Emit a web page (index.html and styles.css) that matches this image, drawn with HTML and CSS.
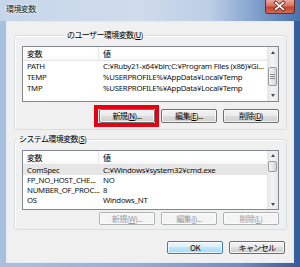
FILE: index.html
```html
<!DOCTYPE html>
<html lang="ja">
<head>
<meta charset="utf-8">
<title>環境変数</title>
<link rel="stylesheet" href="styles.css">
</head>
<body>
<div class="window">
  <div class="titlebar">
    <span class="title">環境変数</span>
    <span class="close">
      <svg width="30" height="14" viewBox="0 0 30 14">
        <path d="M11 3.5 L19 10.5 M19 3.5 L11 10.5" stroke="#5a2a22" stroke-width="3.4" stroke-linecap="square"/>
        <path d="M11 3.5 L19 10.5 M19 3.5 L11 10.5" stroke="#ffffff" stroke-width="1.8" stroke-linecap="square"/>
      </svg>
    </span>
  </div>
  <div class="client">
    <fieldset class="group group-user">
      <legend>のユーザー環境変数(<u>U</u>)</legend>
      <div class="listview lv-user">
        <div class="lv-body">
          <div class="lv-head"><span class="c1">変数</span><span class="c2">値</span></div>
          <div class="row"><span class="c1">PATH</span><span class="c2">C:¥Ruby21-x64¥bin;C:¥Program Files (x86)¥Gi...</span></div>
          <div class="row"><span class="c1">TEMP</span><span class="c2">%USERPROFILE%¥AppData¥Local¥Temp</span></div>
          <div class="row"><span class="c1">TMP</span><span class="c2">%USERPROFILE%¥AppData¥Local¥Temp</span></div>
        </div>
        <div class="scrollbar">
          <span class="arrow up"></span>
          <span class="track"><span class="thumb grip"><i></i><i></i><i></i></span></span>
          <span class="arrow down"></span>
        </div>
      </div>
      <div class="buttons">
        <button class="btn marked">新規(<u>N</u>)...</button>
        <button class="btn">編集(<u>E</u>)...</button>
        <button class="btn">削除(<u>D</u>)</button>
      </div>
    </fieldset>

    <fieldset class="group group-sys">
      <legend>システム環境変数(<u>S</u>)</legend>
      <div class="listview lv-sys">
        <div class="lv-body">
          <div class="lv-head"><span class="c1">変数</span><span class="c2">値</span></div>
          <div class="row selected"><span class="c1">ComSpec</span><span class="c2">C:¥Windows¥system32¥cmd.exe</span></div>
          <div class="row"><span class="c1">FP_NO_HOST_CHE...</span><span class="c2">NO</span></div>
          <div class="row"><span class="c1">NUMBER_OF_PROC...</span><span class="c2">8</span></div>
          <div class="row"><span class="c1">OS</span><span class="c2">Windows_NT</span></div>
        </div>
        <div class="scrollbar">
          <span class="arrow up"></span>
          <span class="track"><span class="thumb"></span></span>
          <span class="arrow down"></span>
        </div>
      </div>
      <div class="buttons">
        <button class="btn" disabled>新規(<u>W</u>)...</button>
        <button class="btn" disabled>編集(<u>I</u>)...</button>
        <button class="btn" disabled>削除(<u>L</u>)</button>
      </div>
    </fieldset>

    <div class="dialog-buttons">
      <button class="btn default">OK</button>
      <button class="btn">キャンセル</button>
    </div>
  </div>
</div>
</body>
</html>
```

FILE: styles.css
```css
* { box-sizing: border-box; }
html, body { margin: 0; padding: 0; }
body {
  width: 300px;
  height: 267px;
  overflow: hidden;
  font-family: "Noto Sans CJK JP", "Noto Sans", sans-serif;
  font-size: 8px;
  letter-spacing: -0.6px;
  color: #000;
  background: #fff;
}
u { text-decoration: underline; text-underline-offset: 1px; }

.window {
  width: 300px;
  height: 267px;
  display: flex;
  flex-direction: column;
  padding-bottom: 4px;
  background: linear-gradient(to right, #a9c1e0 0%, #92afd6 45%, #6a8ec3 80%, #345c99 100%);
}

.titlebar {
  height: 21px;
  flex: none;
  display: flex;
  justify-content: space-between;
  align-items: flex-start;
  padding: 0 5px 0 6px;
  background: linear-gradient(to right, #c6d6ea 0%, #cfdcec 45%, #bccee6 70%, #7e9ecb 86%, #4a71ac 100%);
}
.title {
  margin-top: 3px;
  line-height: 12px;
  font-size: 8px;
  color: #1a1a1a;
  text-shadow: 0 0 3px #fff, 0 0 2px #fff;
}
.close {
  width: 30px;
  height: 14px;
  display: flex;
  border: 1px solid #6b2e26;
  border-top: none;
  border-radius: 0 0 3px 3px;
  background: linear-gradient(#e9a99c 0%, #d6725f 45%, #c4442f 55%, #d36b53 100%);
  overflow: hidden;
}
.close svg { display: block; margin: -1px 0 0 -1px; }

.client {
  flex: 1;
  margin: 0 6px;
  border: 1px solid #e4ebf4;
  background: #f0f0f0;
  padding: 7px 6px 0 7px;
  display: flex;
  flex-direction: column;
}

.group {
  margin: 0;
  padding: 0 7px 6px 7px;
  border: 1px solid #d5dfe5;
  border-radius: 3px;
  min-width: 0;
  box-shadow: inset 1px 1px 0 #fff;
}
.group legend {
  padding: 0 2px;
  line-height: 12px;
  font-size: 8px;
}
.group-user { height: 101px; }
.group-user legend { margin-left: 43px; }
.group-sys { height: 97px; margin-top: 3px; padding-bottom: 4px; }
.group-sys legend { margin-left: -5px; }

.listview {
  margin-top: 5px;
  border: 1px solid #828790;
  background: #fff;
  display: flex;
}
.lv-user { height: 56px; }
.lv-sys { height: 60px; }

.lv-body { flex: 1; min-width: 0; overflow: hidden; }
.lv-head {
  display: flex;
  height: 14px;
  line-height: 13px;
  border-bottom: 1px solid #e5e5e5;
  background: linear-gradient(#fff 0%, #fff 60%, #f7f8fa 100%);
}
.lv-head .c1 { border-right: 1px solid #e5e5e5; }
.c1 {
  width: 76px;
  flex: none;
  padding-left: 4px;
  white-space: nowrap;
}
.c2 {
  flex: 1;
  min-width: 0;
  padding-left: 4px;
  white-space: nowrap;
}
.row {
  display: flex;
  font-family: "Noto Sans", sans-serif;
  font-size: 7.8px;
  letter-spacing: -0.25px;
  color: #111;
}
.lv-user .row { height: 11px; line-height: 11px; }
.lv-sys .row { height: 10px; line-height: 10px; }
.row.selected { background: #e6e6e6; }

.scrollbar {
  width: 11px;
  flex: none;
  display: flex;
  flex-direction: column;
  background: linear-gradient(to right, #e6e6e6, #f1f1f1 40%, #f1f1f1 60%, #e6e6e6);
}
.arrow {
  height: 11px;
  flex: none;
  display: flex;
  align-items: center;
  justify-content: center;
}
.lv-sys .arrow { height: 9px; }
.arrow::before {
  content: "";
  width: 0;
  height: 0;
  border-left: 2.5px solid transparent;
  border-right: 2.5px solid transparent;
}
.arrow.up::before { border-bottom: 3px solid #4a4a4a; }
.arrow.down::before { border-top: 3px solid #4a4a4a; }
.track { flex: 1; display: flex; flex-direction: column; padding: 0 1px; }
.thumb {
  border: 1px solid #9a9a9a;
  border-radius: 2px;
  background: linear-gradient(to right, #f5f5f5, #e6e6e6 50%, #d6d6d6);
  display: flex;
  flex-direction: column;
  justify-content: center;
  align-items: center;
  gap: 1px;
}
.lv-user .thumb { margin-top: 9px; height: 19px; }
.lv-sys .thumb { margin-top: 1px; height: 11px; }
.thumb i { display: block; width: 5px; height: 1px; background: #8a8a8a; }

.buttons {
  display: flex;
  justify-content: flex-end;
  gap: 6px;
  margin-top: 7px;
}
.group-sys .buttons { margin-top: 2px; }

.btn {
  width: 56px;
  height: 14px;
  padding: 0;
  margin: 0;
  font-family: "Noto Sans CJK JP", "Noto Sans", sans-serif;
  font-size: 8px;
  letter-spacing: -0.6px;
  line-height: 12px;
  color: #000;
  border: 1px solid #707070;
  border-radius: 2px;
  background: linear-gradient(#f2f2f2 0%, #ebebeb 50%, #dddddd 50%, #cfcfcf 100%);
  box-shadow: inset 0 0 0 1px rgba(255,255,255,0.7);
}
.group-sys .btn { height: 13px; }
.btn:disabled {
  color: #9a9a9a;
  border-color: #adb2b5;
  background: #f4f4f4;
}
.btn.default {
  border-color: #3c7fb1;
  background: linear-gradient(#eaf6fd 0%, #d9f0fc 50%, #bee6fd 50%, #a7d9f5 100%);
}
.btn.marked { position: relative; }
.btn.marked::after {
  content: "";
  position: absolute;
  left: -6px;
  right: -5px;
  top: -5px;
  bottom: -5px;
  border: 4px solid #e60012;
}

.dialog-buttons {
  display: flex;
  justify-content: flex-end;
  gap: 6px;
  margin-top: 11px;
  padding-right: 2px;
}
.dialog-buttons .btn { height: 13px; }
```
